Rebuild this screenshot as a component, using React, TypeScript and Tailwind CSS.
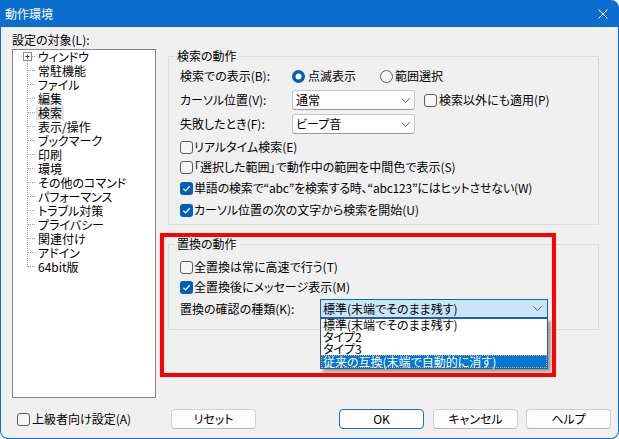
import React from 'react'

const treeItems = [
  'ウィンドウ', '常駐機能', 'ファイル', '編集', '検索', '表示/操作', 'ブックマーク', '印刷',
  '環境', 'その他のコマンド', 'パフォーマンス', 'トラブル対策', 'プライバシー', '関連付け', 'アドイン', '64bit版',
]

function CheckBox({ checked }: { checked?: boolean }) {
  if (checked) {
    return (
      <span className="w-[13px] h-[13px] rounded-[3px] bg-[#005fb8] flex items-center justify-center shrink-0">
        <svg width="9" height="9" viewBox="0 0 9 9">
          <path d="M1.4 4.7 L3.6 6.9 L7.7 2.3" fill="none" stroke="#fff" strokeWidth="1.3" />
        </svg>
      </span>
    )
  }
  return <span className="w-[13px] h-[13px] rounded-[3px] border border-[#5d5d5d] bg-[#f6f6f6] shrink-0" />
}

function Radio({ checked }: { checked?: boolean }) {
  return (
    <svg width="13" height="13" viewBox="0 0 13 13" className="shrink-0">
      {checked ? (
        <>
          <circle cx="6.5" cy="6.5" r="6.5" fill="#005fb8" />
          <circle cx="6.5" cy="6.5" r="3" fill="#fff" />
        </>
      ) : (
        <circle cx="6.5" cy="6.5" r="6" fill="#f6f6f6" stroke="#5d5d5d" strokeWidth="1" />
      )}
    </svg>
  )
}

function Chevron() {
  return (
    <svg width="9" height="5" viewBox="0 0 9 5" className="shrink-0">
      <path d="M0.5 0.5 L4.5 4.5 L8.5 0.5" fill="none" stroke="#5f5f5f" strokeWidth="1" />
    </svg>
  )
}

function Combo({ value, className }: { value: string; className: string }) {
  return (
    <div className={'h-[20px] flex items-center justify-between border border-[#c8c8c8] border-b-[#9a9a9a] bg-white rounded-[3px] pl-[3px] pr-[4px] ' + className}>
      <span>{value}</span>
      <Chevron />
    </div>
  )
}

function CheckRow({ label, checked, className = '' }: { label: string; checked?: boolean; className?: string }) {
  return (
    <div className={'flex items-center gap-[1px] ' + className}>
      <CheckBox checked={checked} />
      <span>{label}</span>
    </div>
  )
}

function TreeLines({ i, last }: { i: number; last: boolean }) {
  const dot = { stroke: '#a0a0a0', strokeDasharray: '1 1', shapeRendering: 'crispEdges' as const }
  return (
    <svg width="23" height="14" viewBox="0 0 23 14" className="shrink-0">
      {i === 0 ? (
        <>
          <line x1="14.5" y1="11" x2="14.5" y2="14" {...dot} />
          <line x1="19" y1="6.5" x2="23" y2="6.5" {...dot} />
          <rect x="10.5" y="2.5" width="8" height="8" fill="#fff" stroke="#8a8f99" />
          <line x1="12.5" y1="6.5" x2="16.5" y2="6.5" stroke="#1c3f8c" />
          <line x1="14.5" y1="4.5" x2="14.5" y2="8.5" stroke="#1c3f8c" />
        </>
      ) : (
        <>
          <line x1="14.5" y1="0" x2="14.5" y2={last ? 7 : 14} {...dot} />
          <line x1="15" y1="6.5" x2="23" y2="6.5" {...dot} />
        </>
      )}
    </svg>
  )
}

function Button({ label, primary, className = '' }: { label: string; primary?: boolean; className?: string }) {
  return (
    <div
      className={
        'w-[85px] h-[20px] flex items-center justify-center rounded-[4px] bg-[#fdfdfd] border ' +
        (primary ? 'border-[#1a6fc4] ' : 'border-[#d0d0d0] border-b-[#b8b8b8] ') +
        className
      }
    >
      {label}
    </div>
  )
}

export default function App() {
  return (
    <div className="relative w-[619px] h-[439px] bg-white">
      <div className="w-[619px] h-[439px] flex flex-col bg-[#0b6dcd] rounded-tr-[8px] rounded-b-[8px] overflow-hidden text-[12px] leading-[14px] text-black [font-family:'Noto_Sans_CJK_JP','Noto_Sans',sans-serif] [font-feature-settings:'palt']">
        <div className="h-[27px] shrink-0 flex items-center justify-between pl-[5px] pr-[11px] text-white">
          <span>動作環境</span>
          <svg width="10" height="10" viewBox="0 0 10 10">
            <path d="M0.5 0.5 L9.5 9.5 M9.5 0.5 L0.5 9.5" stroke="#fff" strokeWidth="1" />
          </svg>
        </div>

        <div className="flex-1 flex flex-col bg-[#f0f0f0] mx-[1px] mb-[1px] rounded-b-[7px]">
          <div className="flex pt-[6px]">
            {/* left: tree */}
            <div className="ml-[11px] w-[144px] flex flex-col">
              <div className="h-[14px] mb-[2px]">設定の対象(L):</div>
              <div className="h-[349px] border border-[#828790] bg-white">
                {treeItems.map((t, i) => (
                  <div key={t} className="flex h-[14px] items-center">
                    <TreeLines i={i} last={i === treeItems.length - 1} />
                    <span className={i === 4 ? 'px-[2px] bg-[#e5e5e5]' : 'px-[2px]'}>{t}</span>
                  </div>
                ))}
              </div>
            </div>

            {/* right: groups */}
            <div className="ml-[12px] pt-[16px] flex flex-col">
              <fieldset className="w-[431px] border border-[#dcdcdc] px-[11px] pb-[3px]">
                <legend className="ml-[-5px] px-[2px] leading-[14px]">検索の動作</legend>
                <div className="mt-[3px] h-[20px] flex items-center">
                  <span className="w-[112px]">検索での表示(B):</span>
                  <div className="w-[88px] flex items-center gap-[3px]">
                    <Radio checked />
                    <span>点滅表示</span>
                  </div>
                  <div className="flex items-center gap-[2px]">
                    <Radio />
                    <span>範囲選択</span>
                  </div>
                </div>
                <div className="mt-[4px] h-[20px] flex items-center">
                  <span className="w-[112px]">カーソル位置(V):</span>
                  <Combo value="通常" className="w-[123px]" />
                  <div className="ml-[9px] flex items-center gap-[2px]">
                    <CheckBox />
                    <span>検索以外にも適用(P)</span>
                  </div>
                </div>
                <div className="mt-[4px] h-[20px] flex items-center">
                  <span className="w-[112px]">失敗したとき(F):</span>
                  <Combo value="ビープ音" className="w-[123px]" />
                </div>
                <CheckRow className="mt-[3px] h-[20px]" label="リアルタイム検索(E)" />
                <CheckRow className="h-[20px]" label="「選択した範囲」で動作中の範囲を中間色で表示(S)" />
                <CheckRow className="h-[22px] tracking-[-0.2px]" checked label="単語の検索で“abc”を検索する時、“abc123”にはヒットさせない(W)" />
                <CheckRow className="h-[22px]" checked label="カーソル位置の次の文字から検索を開始(U)" />
              </fieldset>

              <fieldset className="mt-[12px] w-[431px] border border-[#dcdcdc] px-[11px] pb-[11px]">
                <legend className="ml-[-5px] px-[2px] leading-[14px]">置換の動作</legend>
                <CheckRow className="mt-[6px] h-[20px]" label="全置換は常に高速で行う(T)" />
                <CheckRow className="h-[20px]" checked label="全置換後にメッセージ表示(M)" />
                <div className="mt-[2px] h-[19px] flex items-center">
                  <span className="w-[140px]">置換の確認の種類(K):</span>
                  <div className="relative">
                    <div className="w-[228px] h-[19px] flex items-center justify-between border border-[#0a64c2] bg-[#cce4f7] pl-[2px] pr-[5px]">
                      <span>標準(末端でそのまま残す)</span>
                      <Chevron />
                    </div>
                    <div className="absolute left-0 top-[19px] w-[228px] h-[51px] bg-white border border-[#2b5d9b] shadow-[3px_3px_3px_rgba(0,0,0,0.35)] flex flex-col leading-[12px]">
                      <div className="h-[12px] pl-[2px]">標準(末端でそのまま残す)</div>
                      <div className="h-[12px] pl-[2px]">タイプ2</div>
                      <div className="h-[12px] pl-[2px]">タイプ3</div>
                      <div className="h-[13px] pl-[1px] bg-[#0078d7] text-white border border-dotted border-[#f7a24a] leading-[11px]">従来の互換(末端で自動的に消す)</div>
                    </div>
                  </div>
                </div>
              </fieldset>
            </div>
          </div>

          {/* bottom row */}
          <div className="mt-[11px] h-[20px] flex items-center pl-[16px] pr-[7px]">
            <div className="w-[154px] flex items-center gap-[2px]">
              <CheckBox />
              <span>上級者向け設定(A)</span>
            </div>
            <Button label="リセット" />
            <div className="flex-1" />
            <Button label="OK" primary />
            <Button label="キャンセル" className="ml-[9px]" />
            <Button label="ヘルプ" className="ml-[8px]" />
          </div>
        </div>
      </div>

      {/* red annotation */}
      <div className="absolute left-[160px] top-[233px] w-[396px] h-[144px] border-[4px] border-[#ff0000] pointer-events-none" />
    </div>
  )
}
